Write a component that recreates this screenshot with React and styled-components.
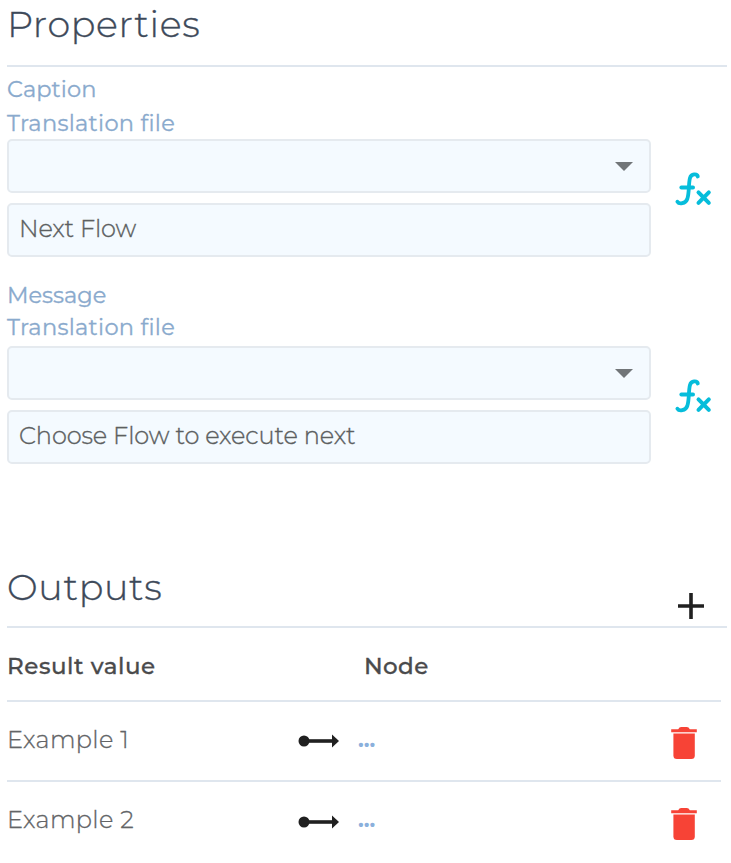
import React from "react";
import styled, { createGlobalStyle } from "styled-components";

const GlobalStyle = createGlobalStyle`
  * { box-sizing: border-box; }
  body {
    margin: 0;
    background: #fff;
    font-family: Montserrat, Inter, "Open Sans", sans-serif;
  }
`;

const Panel = styled.main`
  width: 731px;
  height: 863px;
  padding-left: 7px;
  overflow: hidden;
`;

const SectionHeader = styled.header`
  display: flex;
  justify-content: space-between;
  width: 720px;
  height: ${(p) => p.$height}px;
  padding-right: 22px;
  border-bottom: 2px solid #dfe6ee;
`;

const Title = styled.h2`
  margin: 0;
  font-size: 36.5px;
  line-height: 48px;
  font-weight: 300;
  color: #3d4959;
  -webkit-text-stroke: 0.35px #3d4959;
  white-space: nowrap;
  letter-spacing: ${(p) => p.$tracking}px;
`;

const FieldGroup = styled.section`
  height: ${(p) => p.$height}px;
  padding-top: ${(p) => p.$top}px;
`;

const Label = styled.div`
  height: ${(p) => p.$height}px;
  font-size: 22.5px;
  line-height: 27px;
  color: #8aaacd;
  -webkit-text-stroke: 0.3px #8aaacd;
  white-space: nowrap;
  letter-spacing: ${(p) => p.$tracking}px;
`;

const FieldRow = styled.div`
  display: flex;
  align-items: flex-start;
`;

const Fields = styled.div`
  display: grid;
  gap: 10px;
  width: 644px;
`;

const Field = styled.div`
  display: flex;
  align-items: center;
  height: 54px;
  padding: 0 16px 4px 10px;
  border: 2px solid #e5eaef;
  border-radius: 5px;
  background: #f4faff;
  font-size: 24px;
  font-weight: 300;
  color: #5c5f61;
  -webkit-text-stroke: 0.35px #5c5f61;
  white-space: nowrap;
  letter-spacing: ${(p) => p.$tracking || 0}px;
`;

const SelectField = styled(Field)`
  justify-content: flex-end;
  padding-bottom: 0;
`;

const FormulaIcon = styled.svg`
  width: 40px;
  height: 36px;
  margin: 32px 0 0 22px;
`;

const AddIcon = styled.svg`
  width: 28px;
  height: 28px;
  margin-top: 29px;
`;

const Table = styled.div`
  width: 714px;
`;

const Row = styled.div`
  display: grid;
  grid-template-columns: 291px 60px 1fr 28px;
  height: 80px;
  padding-right: 23px;
  border-bottom: 2px solid #dfe6ee;

  &:last-child {
    border-bottom: 0;
  }
`;

const HeadRow = styled.div`
  display: grid;
  grid-template-columns: 357px 1fr;
  height: 74px;
  padding-top: 22px;
  border-bottom: 2px solid #dfe6ee;
`;

const HeadCell = styled.div`
  font-size: 23px;
  font-weight: 500;
  line-height: 32px;
  color: #4a4a4c;
  -webkit-text-stroke: 0.3px #4a4a4c;
  letter-spacing: ${(p) => p.$tracking}px;
  white-space: nowrap;
`;

const NameCell = styled.div`
  font-size: 24px;
  font-weight: 300;
  line-height: 75px;
  color: #626466;
  -webkit-text-stroke: 0.3px #626466;
  letter-spacing: ${(p) => p.$tracking}px;
`;

const NodeLink = styled.div`
  font-size: 22px;
  font-weight: 700;
  line-height: 76px;
  color: #8bb0dc;
  letter-spacing: 0;
`;

const ArrowIcon = styled.svg`
  width: 42px;
  height: 14px;
  margin-top: ${(p) => p.$top}px;
`;

const TrashIcon = styled.svg`
  width: 28px;
  height: 34px;
  margin-top: ${(p) => p.$top}px;
`;

function Formula() {
  return (
    <FormulaIcon viewBox="0 0 40 36" fill="none" stroke="#06bddb" strokeLinecap="round">
      <path d="M24.8 5.5C24.2 2.6 18.2 2.3 16.9 7.2C15.4 13.3 16.4 21.8 14.3 28C12.5 32.7 6.2 33.6 4.4 30.7" strokeWidth="3.8" />
      <path d="M8.4 16.4H20" strokeWidth="4" />
      <path d="M25.5 21.4L35.8 31.8M35.8 21.4L25.5 31.8" strokeWidth="4" />
    </FormulaIcon>
  );
}

function Caret() {
  return (
    <svg width="18" height="9" viewBox="0 0 18 9">
      <path d="M0 0H18L9 9Z" fill="#717578" />
    </svg>
  );
}

function TranslationField({ value, tracking }) {
  return (
    <FieldRow>
      <Fields>
        <SelectField><Caret /></SelectField>
        <Field $tracking={tracking}>{value}</Field>
      </Fields>
      <Formula />
    </FieldRow>
  );
}

function OutputRow({ name, tracking, iconTop }) {
  return (
    <Row>
      <NameCell $tracking={tracking}>{name}</NameCell>
      <ArrowIcon $top={iconTop} viewBox="0 0 42 14">
        <circle cx="6" cy="7" r="5.5" fill="#202020" />
        <path d="M6 7H36" stroke="#202020" strokeWidth="3.6" />
        <path d="M34 0.5L41 7L34 13.5Z" fill="#202020" />
      </ArrowIcon>
      <NodeLink>...</NodeLink>
      <TrashIcon $top={iconTop - 9} viewBox="0 0 28 34" fill="#f74336">
        <path d="M1.2 4.3H8.2Q9.2 2 11.2 2H16.8Q18.8 2 19.8 4.3H26.8V7.2H1.2Z" />
        <path d="M3.4 8.6H24.8V30.5Q24.8 34 21.3 34H6.9Q3.4 34 3.4 30.5Z" />
      </TrashIcon>
    </Row>
  );
}

export default function App() {
  return (
    <>
      <GlobalStyle />
      <Panel>
        <SectionHeader $height={67}>
          <Title $tracking={0.7}>Properties</Title>
        </SectionHeader>
        <FieldGroup $top={9} $height={203}>
          <Label $height={34} $tracking={0.1}>Caption</Label>
          <Label $height={29} $tracking={0.3}>Translation file</Label>
          <TranslationField value="Next Flow" tracking={-0.15} />
        </FieldGroup>
        <FieldGroup $top={12} $height={293}>
          <Label $height={32} $tracking={0}>Message</Label>
          <Label $height={32} $tracking={0.3}>Translation file</Label>
          <TranslationField value="Choose Flow to execute next" tracking={-0.1} />
        </FieldGroup>
        <SectionHeader $height={65}>
          <Title $tracking={0.7}>Outputs</Title>
          <AddIcon viewBox="0 0 28 28">
            <path d="M1 14H27M14 1V27" stroke="#202020" strokeWidth="3.6" />
          </AddIcon>
        </SectionHeader>
        <Table>
          <HeadRow>
            <HeadCell $tracking={0.55}>Result value</HeadCell>
            <HeadCell $tracking={0.4}>Node</HeadCell>
          </HeadRow>
          <OutputRow name="Example 1" tracking={0.35} iconTop={32} />
          <OutputRow name="Example 2" tracking={0.35} iconTop={33} />
        </Table>
      </Panel>
    </>
  );
}
